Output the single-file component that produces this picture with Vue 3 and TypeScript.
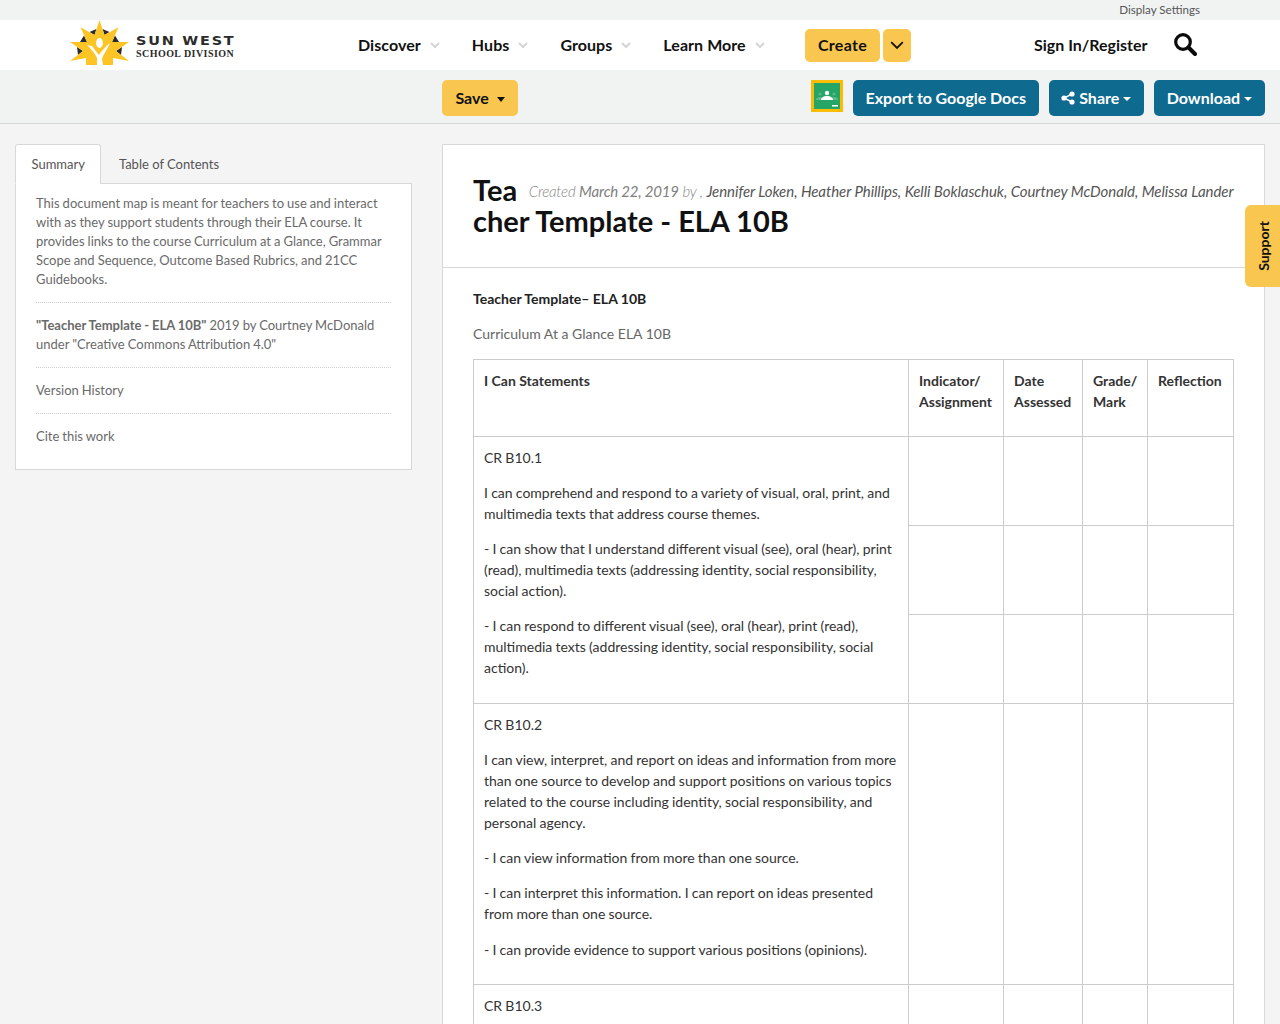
<script setup lang="ts">
const navItems: string[] = ['Discover', 'Hubs', 'Groups', 'Learn More']
const emptyCols = [0, 1, 2, 3]
</script>

<template>
  <div class="page">
    <div class="topbar"><a class="display">Display Settings</a></div>
    <header class="nav">
      <div class="logo">
        <svg width="60" height="46" viewBox="0 0 60 46">
          <path d="M24.500 15L19.500 12L26.500 9ZM34.500 15L39.500 12L32.500 9ZM17 22L10 22L14 15.500ZM42 22L49 22L45 15.500ZM13 31L7 27L8 35ZM46 31L52 27L51 35Z" fill="#2b2b2b" />
          <path d="M29.500 0L34.500 15L48.500 7.300L42 22L59 22L46 31L59 41L43 38L43 45L16 45L16 38L0 41L13 31L0 22L17 22L10.500 7.300L24.500 15Z" fill="#fdc425" />
          <ellipse cx="29.500" cy="23" rx="3.400" ry="5" fill="#fff" />
          <path d="M17 25L22 26C25 30 27 33 29 35C31 32 34 28 40 23C37 30 33 35 32 39L33 45L27 45L27 38C25 33 21 29 17 25Z" fill="#fff" />
        </svg>
        <div class="logo-text">
          <div class="logo-a">SUN WEST</div>
          <div class="logo-b">SCHOOL DIVISION</div>
        </div>
      </div>
      <nav class="menu">
        <a v-for="item in navItems" :key="item" class="menu-item">
          {{ item }}
          <svg class="chev" width="10" height="7" viewBox="0 0 10 7"><path d="M1 1l4 4 4-4" fill="none" stroke="#d3d5d5" stroke-width="2" /></svg>
        </a>
      </nav>
      <div class="create-group">
        <button class="btn-y create">Create</button>
        <button class="btn-y caret-btn">
          <svg width="14" height="9" viewBox="0 0 14 9"><path d="M1.200 1.200L7 7l5.800-5.800" fill="none" stroke="#111" stroke-width="1.800" /></svg>
        </button>
      </div>
      <a class="signin">Sign In/Register</a>
      <svg class="search" width="24" height="24" viewBox="0 0 24 24">
        <circle cx="10" cy="10" r="7.300" fill="none" stroke="#0b0b0b" stroke-width="3.200" />
        <path d="M15.500 15.500L22 22" stroke="#0b0b0b" stroke-width="4" stroke-linecap="round" />
      </svg>
    </header>
    <div class="toolbar">
      <button class="btn-y save">Save <span class="tri dark"></span></button>
      <div class="tool-right">
        <div class="classroom">
          <svg width="26" height="26" viewBox="0 0 26 26">
            <rect width="26" height="26" fill="#25a667" />
            <circle cx="6" cy="11" r="1.600" fill="#57bb8a" />
            <circle cx="20" cy="11" r="1.600" fill="#57bb8a" />
            <path d="M2 17c0-2 2-3 4-3s4 1 4 3zM16 17c0-2 2-3 4-3s4 1 4 3z" fill="#57bb8a" />
            <circle cx="13" cy="10" r="2.200" fill="#fff" />
            <path d="M7 17c0-2.500 3-4 6-4s6 1.500 6 4z" fill="#fff" />
            <rect x="18" y="22" width="6" height="1.500" fill="#fff" />
          </svg>
        </div>
        <button class="btn-b export">Export to Google Docs</button>
        <button class="btn-b share">
          <svg width="14" height="14" viewBox="0 0 14 14">
            <circle cx="11" cy="3" r="2.600" fill="#fff" /><circle cx="11" cy="11" r="2.600" fill="#fff" /><circle cx="3" cy="7" r="2.600" fill="#fff" />
            <path d="M11 3L3 7l8 4" fill="none" stroke="#fff" stroke-width="1.400" />
          </svg>
          Share <span class="tri light"></span>
        </button>
        <button class="btn-b">Download <span class="tri light"></span></button>
      </div>
    </div>

    <div class="content">
      <aside class="side">
        <div class="tabs">
          <span class="tab active">Summary</span>
          <span class="tab">Table of Contents</span>
        </div>
        <div class="panel">
          <p class="sect">This document map is meant for teachers to use and interact with as they support students through their ELA course. It provides links to the course Curriculum at a Glance, Grammar Scope and Sequence, Outcome Based Rubrics, and 21CC Guidebooks.</p>
          <p class="sect"><b>"Teacher Template - ELA 10B"</b> 2019 by Courtney McDonald under "Creative Commons Attribution 4.0"</p>
          <p class="sect">Version History</p>
          <p class="sect">Cite this work</p>
        </div>
      </aside>

      <main class="doc">
        <div class="doc-head">
          <div class="meta"><span class="lead">Created <em class="date">March 22, 2019</em> by , </span><span class="auth">Jennifer Loken</span>, <span class="auth">Heather Phillips</span>, <span class="auth">Kelli Boklaschuk</span>, <span class="auth">Courtney McDonald</span>, <span class="auth">Melissa Lander</span></div>
          <h1>Teacher Template - ELA 10B</h1>
        </div>
        <div class="doc-body">
          <p class="b-title">Teacher Template– ELA 10B</p>
          <p class="sub">Curriculum At a Glance ELA 10B</p>
          <table>
            <colgroup>
              <col class="c1" /><col class="c2" /><col class="c3" /><col class="c4" /><col class="c5" />
            </colgroup>
            <tbody>
              <tr class="r-head">
                <th>I Can Statements</th>
                <th>Indicator/ Assignment</th>
                <th>Date Assessed</th>
                <th>Grade/ Mark</th>
                <th>Reflection</th>
              </tr>
              <tr class="r-sub">
                <td rowspan="3">
                  <p>CR B10.1</p>
                  <p>I can comprehend and respond to a variety of visual, oral, print, and multimedia texts that address course themes.</p>
                  <p>- I can show that I understand different visual (see), oral (hear), print (read), multimedia texts (addressing identity, social responsibility, social action).</p>
                  <p>- I can respond to different visual (see), oral (hear), print (read), multimedia texts (addressing identity, social responsibility, social action).</p>
                </td>
                <td v-for="c in emptyCols" :key="c"></td>
              </tr>
              <tr class="r-sub"><td v-for="c in emptyCols" :key="c"></td></tr>
              <tr class="r-sub"><td v-for="c in emptyCols" :key="c"></td></tr>
              <tr>
                <td>
                  <p>CR B10.2</p>
                  <p>I can view, interpret, and report on ideas and information from more than one source to develop and support positions on various topics related to the course including identity, social responsibility, and personal agency.</p>
                  <p>- I can view information from more than one source.</p>
                  <p>- I can interpret this information. I can report on ideas presented from more than one source.</p>
                  <p class="wide-gap">- I can provide evidence to support various positions (opinions).</p>
                </td>
                <td v-for="c in emptyCols" :key="c"></td>
              </tr>
              <tr>
                <td><p>CR B10.3</p><p>I can compose and create a variety of texts.</p></td>
                <td v-for="c in emptyCols" :key="c"></td>
              </tr>
            </tbody>
          </table>
        </div>
      </main>
    </div>

    <div class="support"><span>Support</span></div>
  </div>
</template>

<style>
html, body { margin: 0; height: 100%; overflow: hidden; }
</style>

<style scoped>
.page {
  position: relative;
  height: 1024px;
  overflow: hidden;
  background: #f4f4f4;
  font-family: Lato, "Liberation Sans", sans-serif;
  color: #555;
}
.topbar {
  height: 20px;
  background: #f1f3f3;
  display: flex;
  justify-content: flex-end;
  align-items: flex-start;
  padding-right: 80px;
}
.display { font-size: 11.600px; line-height: 20px; color: #555; }
.nav {
  height: 50px;
  background: #fff;
  display: flex;
  align-items: center;
  color: #111;
}
.logo {
  display: flex;
  align-items: flex-start;
  margin-left: 70px;
  width: 288px;
  height: 50px;
  flex: none;
}
.logo-text { margin-left: 6px; padding-top: 14px; color: #2b2b2b; }
.logo-a {
  font-family: "DejaVu Sans", sans-serif;
  font-weight: 700;
  font-size: 13px;
  line-height: 14px;
  letter-spacing: 1.600px;
  transform: scaleX(1.110);
  transform-origin: left;
}
.logo-b {
  font-family: "Liberation Serif", serif;
  font-weight: 700;
  font-size: 10px;
  line-height: 12px;
  letter-spacing: 0.450px;
}
.menu { display: flex; width: 447px; flex: none; padding-bottom: 2px; }
.menu-item {
  display: flex;
  align-items: center;
  gap: 9px;
  margin-right: 32px;
  font-size: 16px;
  letter-spacing: 0.060px;
  font-weight: 700;
  color: #111;
}
.chev { margin-top: 3px; }
.create-group { display: flex; gap: 3px; width: 229px; flex: none; }
.btn-y {
  background: #f9c74f;
  border: 0;
  border-radius: 5px;
  font-family: inherit;
  font-weight: 700;
  font-size: 16px;
  color: #111;
  padding: 0 0 2px;
}
.create { width: 75px; height: 33px; letter-spacing: 0.300px; }
.caret-btn { width: 28px; height: 33px; display: flex; align-items: center; justify-content: center; padding: 0; }
.signin { font-size: 16px; font-weight: 700; color: #111; width: 140px; flex: none; padding-bottom: 2px; }
.search { flex: none; margin: -2px 0 0 -1px; }
.toolbar {
  height: 43px;
  background: #f1f3f3;
  border-bottom: 1px solid #d6d6d6;
  display: flex;
  align-items: flex-start;
  padding-top: 10px;
}
.save {
  margin-left: 442px;
  width: 76px;
  height: 36px;
}
.tri {
  display: inline-block;
  width: 0;
  height: 0;
  border-left: 4px solid transparent;
  border-right: 4px solid transparent;
  vertical-align: middle;
}
.tri.dark { border-top: 5px solid #111; margin-left: 4px; }
.tri.light { border-top: 4px solid #fff; margin-left: 0; }
.tool-right {
  margin-left: auto;
  margin-right: 15px;
  display: flex;
  gap: 10px;
}
.classroom {
  width: 26px;
  height: 26px;
  border: 3px solid #fbbc04;
  line-height: 0;
  align-self: flex-start;
}
.btn-b {
  height: 36px;
  background: #0e6a8f;
  border: 0;
  border-radius: 5px;
  color: #fff;
  font-family: inherit;
  font-size: 16px;
  font-weight: 700;
  padding: 0 13px 2px;
  white-space: nowrap;
}
.export { width: 186px; padding: 0 0 2px; word-spacing: -0.300px; }
.share { width: 95px; padding: 0 0 2px; }
.btn-b svg { vertical-align: -1px; }
.content {
  display: flex;
  align-items: flex-start;
  padding: 20px 15px 0;
  gap: 30px;
}
.side { width: 397px; flex: none; }
.tabs { display: flex; height: 39px; position: relative; z-index: 1; font-size: 13px; }
.tab {
  padding: 0 15px;
  line-height: 39px;
  border: 1px solid transparent;
  border-radius: 3px 3px 0 0;
  margin-right: 2px;
  color: #555;
  height: 39px;
  box-sizing: border-box;
}
.tab.active {
  background: #fff;
  border-color: #d8d8d8;
  border-bottom-color: #fff;
  height: 40px;
  padding: 0 15.500px;
  margin-right: 1.500px;
}
.panel {
  background: #fff;
  border: 1px solid #d8d8d8;
  padding: 10px 20px 0;
  font-size: 13px;
  line-height: 19px;
  word-spacing: -0.300px;
  color: #6a6a6a;
}
.sect { margin: 0 0 13px; padding-bottom: 13px; border-bottom: 1px dotted #ccc; }
.sect:last-child { border-bottom: 0; margin-bottom: 0; padding-bottom: 23px; }
.doc {
  width: 823px;
  flex: none;
  background: #fff;
  border: 1px solid #d8d8d8;
  box-sizing: border-box;
}
.doc-head {
  padding: 29px 30px 0;
  height: 123px;
  box-sizing: border-box;
  border-bottom: 1px solid #d8d8d8;
}
.meta {
  float: right;
  height: 30px;
  font-size: 15px;
  font-style: italic;
  font-weight: 400;
  line-height: 34px;
  color: #555;
  letter-spacing: -0.060px;
  margin-right: 0.500px;
}
.lead { font-weight: 300; color: #888; letter-spacing: -0.200px; }
.date { font-weight: 400; color: #808080; }
.auth { font-weight: 400; color: #555; }
h1 {
  margin: 0;
  font-size: 29px;
  font-weight: 700;
  line-height: 31px;
  color: #111;
  word-break: break-all;
}
.doc-body { padding: 20px 30px 0; font-size: 14px; line-height: 21px; color: #444; }
.b-title { margin: 0 0 14px; font-size: 14px; font-weight: 700; color: #222; }
.sub { margin: 0 0 15px; color: #666; }
table { border-collapse: collapse; width: 760px; table-layout: fixed; }
.c1 { width: 435px; }
.c2 { width: 95px; }
.c3 { width: 79px; }
.c4 { width: 65px; }
.c5 { width: 86px; }
th, td {
  border: 1px solid #ccc;
  padding: 10px;
  vertical-align: top;
  text-align: left;
  color: #333;
}
th { font-size: 14px; font-weight: 700; color: #333; }
.r-head { height: 77px; }
.r-sub { height: 89px; }
td p { margin: 0 0 14px; word-spacing: -0.350px; }
td p.wide-gap { margin-top: 15px; }
.support {
  position: absolute;
  left: 1245px;
  top: 205px;
  width: 40px;
  height: 82px;
  border-radius: 6px;
  background: #f9c74f;
  display: flex;
  align-items: center;
  justify-content: center;
  padding-right: 3px;
  box-sizing: border-box;
}
.support span {
  writing-mode: vertical-rl;
  transform: rotate(180deg);
  font-size: 14px;
  font-weight: 700;
  color: #111;
}
</style>
